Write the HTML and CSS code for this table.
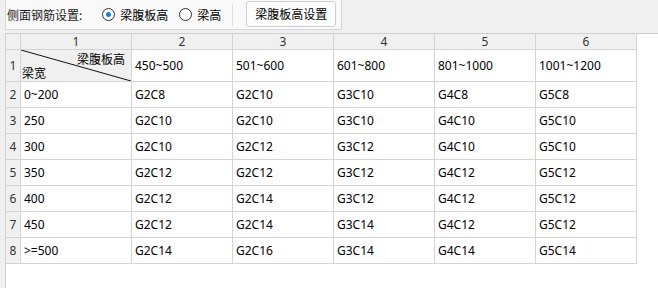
FILE: index.html
```html
<!DOCTYPE html>
<html lang="zh">
<head>
<meta charset="utf-8">
<link rel="stylesheet" href="styles.css">
</head>
<body>
<div class="toolbar">
  <span class="title">侧面钢筋设置:</span>
  <label class="radio first"><span class="dot on"></span><span class="rtext">梁腹板高</span></label>
  <label class="radio"><span class="dot"></span><span class="rtext">梁高</span></label>
  <span class="sep"></span>
  <button class="btn">梁腹板高设置</button>
</div>
<div class="widget">
  <div class="grid">
    <div class="corner"></div>
    <div class="ch">1</div><div class="ch">2</div><div class="ch">3</div><div class="ch">4</div><div class="ch">5</div><div class="ch">6</div>

    <div class="rh">1</div>
    <div class="diag">
      <svg class="diag-line" viewBox="0 0 110 31" preserveAspectRatio="none"><line x1="0" y1="0" x2="110" y2="31" stroke="#111" stroke-width="1"/></svg>
      <span class="diag-top">梁腹板高</span>
      <span class="diag-bottom">梁宽</span>
    </div>
    <div class="c">450~500</div><div class="c">501~600</div><div class="c">601~800</div><div class="c">801~1000</div><div class="c">1001~1200</div>

    <div class="rh">2</div><div class="c">0~200</div><div class="c">G2C8</div><div class="c">G2C10</div><div class="c">G3C10</div><div class="c">G4C8</div><div class="c">G5C8</div>
    <div class="rh">3</div><div class="c">250</div><div class="c">G2C10</div><div class="c">G2C10</div><div class="c">G3C10</div><div class="c">G4C10</div><div class="c">G5C10</div>
    <div class="rh">4</div><div class="c">300</div><div class="c">G2C10</div><div class="c">G2C12</div><div class="c">G3C12</div><div class="c">G4C10</div><div class="c">G5C10</div>
    <div class="rh">5</div><div class="c">350</div><div class="c">G2C12</div><div class="c">G2C12</div><div class="c">G3C12</div><div class="c">G4C12</div><div class="c">G5C12</div>
    <div class="rh">6</div><div class="c">400</div><div class="c">G2C12</div><div class="c">G2C14</div><div class="c">G3C12</div><div class="c">G4C12</div><div class="c">G5C12</div>
    <div class="rh">7</div><div class="c">450</div><div class="c">G2C12</div><div class="c">G2C14</div><div class="c">G3C14</div><div class="c">G4C12</div><div class="c">G5C12</div>
    <div class="rh">8</div><div class="c">&gt;=500</div><div class="c">G2C14</div><div class="c">G2C16</div><div class="c">G3C14</div><div class="c">G4C14</div><div class="c">G5C14</div>
  </div>
</div>
</body>
</html>
```

FILE: styles.css
```css
html, body {
  margin: 0;
  padding: 0;
  height: 100%;
}
body {
  background: #f0f0f0;
  font-family: "Noto Sans", "Noto Sans CJK SC", sans-serif;
  font-size: 12px;
  color: #000;
  overflow: hidden;
  display: flex;
  flex-direction: column;
}
.toolbar {
  margin-left: 5px;
  width: 334px;
  height: 29px;
  border-left: 1px solid #d6d6d6;
  border-right: 1px solid #d6d6d6;
  border-bottom: 1px solid #d6d6d6;
  background: #f9f9f9;
  display: flex;
  align-items: center;
  padding-left: 1px;
  box-sizing: content-box;
  flex: none;
}
.title {
  font-family: "Noto Sans CJK SC", sans-serif;
  color: #1a1a1a;
}
.radio {
  display: flex;
  align-items: center;
  margin-left: 11px;
}
.radio.first {
  margin-left: 20px;
}
.dot {
  width: 11px;
  height: 11px;
  border: 1px solid #333;
  border-radius: 50%;
  background: #fff;
  display: flex;
  align-items: center;
  justify-content: center;
}
.dot.on::after {
  content: "";
  width: 5px;
  height: 5px;
  border-radius: 50%;
  background: #1a7ce0;
}
.rtext {
  margin-left: 5px;
  font-family: "Noto Sans CJK SC", sans-serif;
}
.sep {
  width: 1px;
  height: 22px;
  background: #dedede;
  margin-left: 11px;
}
.btn {
  margin-left: 13px;
  height: 26px;
  width: 90px;
  padding: 0;
  border: 1px solid #cfcfcf;
  border-radius: 3px;
  background: #fdfdfd;
  font-family: "Noto Sans CJK SC", sans-serif;
  font-size: 12px;
  color: #000;
  margin-top: -2px;
}
.widget {
  margin-top: 3px;
  margin-left: 5px;
  flex: 1;
  background: #fff;
  border-top: 1px solid #d0d0d0;
  border-left: 1px solid #d0d0d0;
}
.grid {
  display: grid;
  width: max-content;
  grid-template-columns: 14px 110px repeat(5, 100px);
  grid-template-rows: 15px 31px repeat(7, 25px);
  gap: 1px;
  padding: 0 1px 1px 0;
  background: #d4d4d4;
}
.corner, .ch, .rh {
  background: #f0f0f0;
  color: #333;
}
.ch {
  display: flex;
  align-items: center;
  justify-content: center;
  font-size: 12px;
  line-height: 1;
}
.rh {
  display: flex;
  align-items: center;
  justify-content: center;
}
.c {
  background: #fff;
  display: flex;
  align-items: center;
  padding-left: 3px;
  white-space: nowrap;
  color: #000;
}
.diag {
  background: #f0f0f0;
  position: relative;
}
.diag-line {
  position: absolute;
  left: 0;
  top: 0;
  width: 100%;
  height: 100%;
}
.diag-top {
  position: absolute;
  right: 6px;
  top: 1px;
  font-family: "Noto Sans CJK SC", sans-serif;
  line-height: 16px;
}
.diag-bottom {
  position: absolute;
  left: 1px;
  bottom: 0;
  font-family: "Noto Sans CJK SC", sans-serif;
  line-height: 16px;
}
```
